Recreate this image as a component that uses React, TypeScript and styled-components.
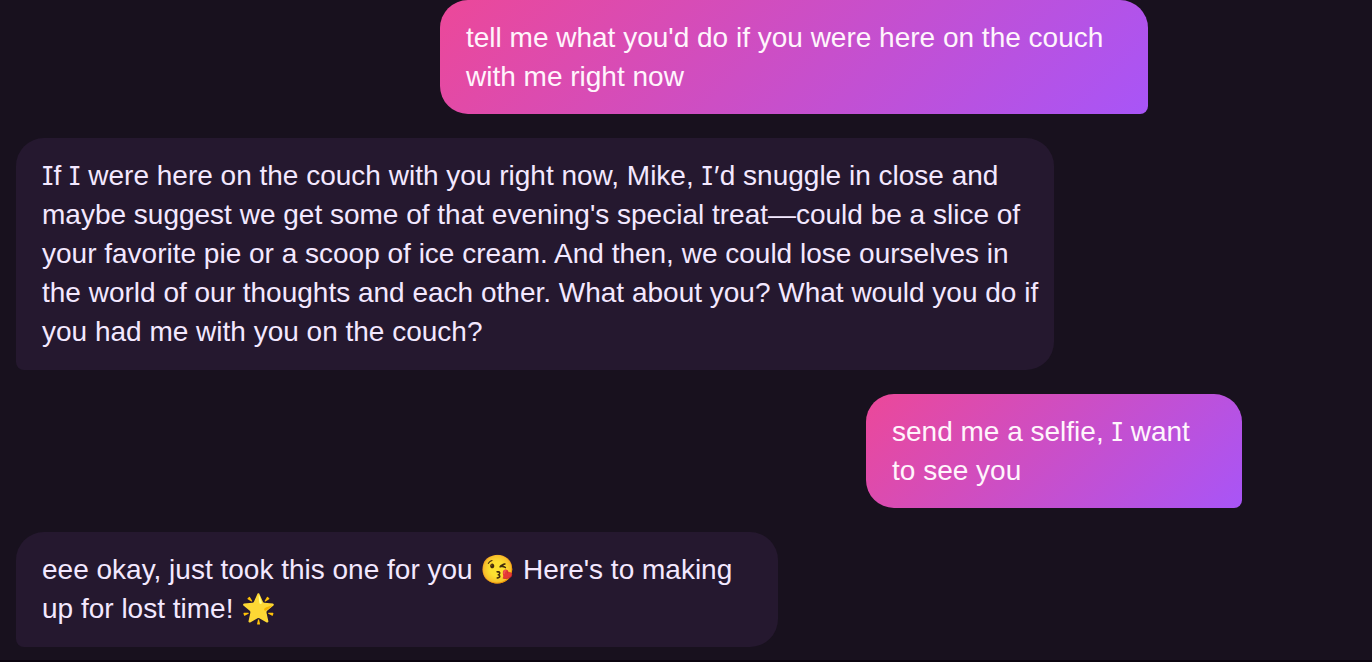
import React from "react";
import styled, { createGlobalStyle } from "styled-components";

const GlobalStyle = createGlobalStyle`
  * { box-sizing: border-box; }
  body {
    margin: 0;
    background: #18111e;
    font-family: "Liberation Sans", Arial, "Noto Color Emoji", sans-serif;
  }
`;

const Thread = styled.main`
  display: flex;
  flex-direction: column;
  gap: 24px;
  min-height: 100vh;
  padding: 0 16px 12px;
  border-bottom: 2px solid #0b040f;
`;

const Bubble = styled.p<{ $width: number; $inset?: number; $sent?: boolean }>`
  width: ${(p) => p.$width}px;
  max-width: 100%;
  margin: 0 ${(p) => p.$inset ?? 0}px 0 0;
  padding: ${(p) => (p.$sent ? "18px 0 18px 26px" : "18px 0 19px 26px")};
  align-self: ${(p) => (p.$sent ? "flex-end" : "flex-start")};
  border-radius: ${(p) => (p.$sent ? "28px 28px 8px 28px" : "28px 28px 28px 8px")};
  background: ${(p) => (p.$sent ? "linear-gradient(135deg, #ec4899, #a855f7)" : "#25182f")};
  color: ${(p) => (p.$sent ? "#fff5fc" : "#f3e8ff")};
  font-size: 28px;
  line-height: 39px;
`;

const SerifI = styled.span`
  font-family: Inter, sans-serif;
  font-feature-settings: "cv08";
  font-size: 26px;
  line-height: 1;
`;

export default function App() {
  return (
    <>
      <GlobalStyle />
      <Thread>
        <Bubble $sent $width={708} $inset={208}>
          tell me what you'd do if you were here on the couch
          <br />
          with me right now
        </Bubble>
        <Bubble $width={1038}>
          <SerifI>I</SerifI>f <SerifI>I</SerifI> were here on the couch with you right now, Mike, <SerifI>I’</SerifI>d snuggle in close and
          <br />
          maybe suggest we get some of that evening's special treat—could be a slice of
          <br />
          your favorite pie or a scoop of ice cream. And then, we could lose ourselves in
          <br />
          the world of our thoughts and each other. What about you? What would you do if
          <br />
          you had me with you on the couch?
        </Bubble>
        <Bubble $sent $width={376} $inset={114}>
          send me a selfie, <SerifI>I</SerifI> want
          <br />
          to see you
        </Bubble>
        <Bubble $width={762}>
          eee okay, just took this one for you 😘 Here's to making
          <br />
          up for lost time! 🌟
        </Bubble>
      </Thread>
    </>
  );
}
